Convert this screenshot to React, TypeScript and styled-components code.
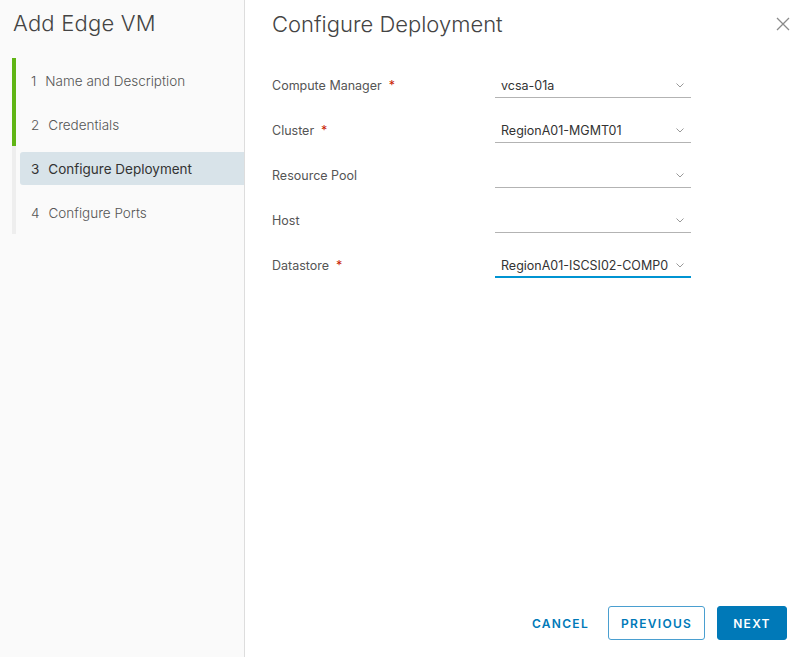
import React from "react";
import styled, { createGlobalStyle } from "styled-components";

const Global = createGlobalStyle`
  html, body { margin: 0; padding: 0; height: 100%; background: #fff; }
  #root { height: 100%; }
  * { box-sizing: border-box; }
  body { font-family: Inter, "Open Sans", sans-serif; color: #565656; }
`;

const Modal = styled.div`
  display: flex;
  width: 811px;
  height: 657px;
  background: #fff;
  overflow: hidden;
`;

const Sidebar = styled.aside`
  width: 245px;
  flex: none;
  background: #fafafa;
  border-right: 1px solid #dddddd;
  padding: 10px 0 0 12px;
  display: flex;
  flex-direction: column;
`;

const SideTitle = styled.h1`
  margin: 0 0 0 1px;
  font-size: 22px;
  font-weight: 300;
  line-height: 26px;
  letter-spacing: 0.2px;
  color: #444;
`;

const StepList = styled.ol`
  list-style: none;
  margin: 22px 0 0 0;
  padding: 6px 0 5px 0;
  display: flex;
  flex-direction: column;
  gap: 11px;
  position: relative;
  border-left: 4px solid #eeeeee;
`;

const Progress = styled.span<{ $h: number }>`
  position: absolute;
  left: -4px;
  top: 0;
  width: 4px;
  height: ${(p) => p.$h}px;
  background: #60b515;
`;

const Step = styled.li<{ $active?: boolean }>`
  margin-left: 4px;
  height: 33px;
  display: flex;
  align-items: center;
  padding-left: 11px;
  font-size: 13.5px;
  font-weight: ${(p) => (p.$active ? 400 : 300)};
  color: ${(p) => (p.$active ? "#333" : "#555")};
  background: ${(p) => (p.$active ? "#d8e3e9" : "transparent")};
  border-radius: 3px 0 0 3px;
`;

const StepNum = styled.span`
  margin-right: 9px;
`;

const Main = styled.main`
  flex: 1;
  display: flex;
  flex-direction: column;
  padding: 10px 24px 17px 27px;
`;

const Header = styled.div`
  display: flex;
  justify-content: space-between;
  align-items: center;
`;

const Heading = styled.h2`
  margin: 0;
  font-size: 22px;
  font-weight: 300;
  line-height: 28px;
  color: #444;
`;

const Close = styled.button`
  border: none;
  background: none;
  padding: 0;
  margin-right: -8px;
  width: 24px;
  height: 24px;
  display: flex;
  align-items: center;
  justify-content: center;
  cursor: pointer;
`;

const Form = styled.div`
  margin-top: 29px;
  display: flex;
  flex-direction: column;
  gap: 8px;
`;

const Row = styled.div`
  display: flex;
  align-items: center;
  height: 37px;
`;

const Label = styled.label`
  width: 223px;
  flex: none;
  font-size: 12.5px;
  color: #555;
`;

const Req = styled.span`
  color: #c92100;
  margin-left: 7px;
`;

const Select = styled.div<{ $focus?: boolean }>`
  width: 196px;
  height: 24px;
  display: flex;
  align-items: center;
  justify-content: space-between;
  padding: 0 6px 0 6px;
  font-size: 12.5px;
  color: #333;
  border-bottom: ${(p) => (p.$focus ? "2px solid #0094d2" : "1px solid #b3b3b3")};
  margin-top: ${(p) => (p.$focus ? "1px" : "0")};
`;

const Footer = styled.div`
  margin-top: auto;
  display: flex;
  justify-content: flex-end;
  align-items: center;
  gap: 12px;
`;

const Btn = styled.button<{ $kind: "flat" | "outline" | "primary" }>`
  height: 34px;
  padding: 0 ${(p) => (p.$kind === "flat" ? "6px" : "12px")};
  min-width: ${(p) => (p.$kind === "primary" ? "70px" : "auto")};
  width: ${(p) => (p.$kind === "outline" ? "97px" : "auto")};
  font-family: Inter, sans-serif;
  font-size: 12px;
  font-weight: 600;
  letter-spacing: 1.3px;
  border-radius: 3px;
  cursor: pointer;
  color: ${(p) => (p.$kind === "primary" ? "#fff" : "#0079b8")};
  background: ${(p) => (p.$kind === "primary" ? "#0079b8" : "transparent")};
  border: 1px solid;
  border-color: ${(p) =>
    p.$kind === "flat" ? "transparent" : p.$kind === "outline" ? "#4a9fd0" : "#0079b8"};
`;

const Chevron = () => (
  <svg width="10" height="10" viewBox="0 0 10 10" fill="none">
    <path d="M1.5 3.5l3.5 3.5 3.5-3.5" stroke="#999" strokeWidth="1" />
  </svg>
);

const rows: { label: string; req?: boolean; value: string; focus?: boolean }[] = [
  { label: "Compute Manager", req: true, value: "vcsa-01a" },
  { label: "Cluster", req: true, value: "RegionA01-MGMT01" },
  { label: "Resource Pool", value: "" },
  { label: "Host", value: "" },
  { label: "Datastore", req: true, value: "RegionA01-ISCSI02-COMP0", focus: true },
];

const steps = ["Name and Description", "Credentials", "Configure Deployment", "Configure Ports"];

export default function App() {
  return (
    <>
      <Global />
      <Modal>
        <Sidebar>
          <SideTitle>Add Edge VM</SideTitle>
          <StepList>
            <Progress $h={88} />
            {steps.map((s, i) => (
              <Step key={s} $active={i === 2}>
                <StepNum>{i + 1}</StepNum>
                {s}
              </Step>
            ))}
          </StepList>
        </Sidebar>
        <Main>
          <Header>
            <Heading>Configure Deployment</Heading>
            <Close aria-label="Close">
              <svg width="14" height="14" viewBox="0 0 14 14">
                <path d="M1 1l12 12M13 1L1 13" stroke="#8a8a8a" strokeWidth="1.3" />
              </svg>
            </Close>
          </Header>
          <Form>
            {rows.map((r) => (
              <Row key={r.label}>
                <Label>
                  {r.label}
                  {r.req && <Req>*</Req>}
                </Label>
                <Select $focus={r.focus}>
                  <span>{r.value}</span>
                  <Chevron />
                </Select>
              </Row>
            ))}
          </Form>
          <Footer>
            <Btn $kind="flat">CANCEL</Btn>
            <Btn $kind="outline">PREVIOUS</Btn>
            <Btn $kind="primary">NEXT</Btn>
          </Footer>
        </Main>
      </Modal>
    </>
  );
}
